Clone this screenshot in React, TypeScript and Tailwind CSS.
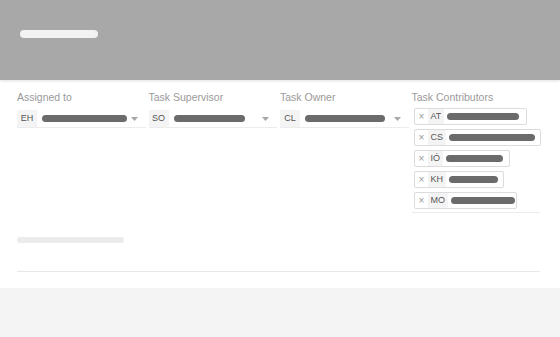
import React from "react";

const font = { fontFamily: '"Liberation Sans", Arial, sans-serif' };

function Single({ label, initials, bar }: { label: string; initials: string; bar: number }) {
  return (
    <div className="flex flex-col">
      <div className="text-[10.5px] leading-[13px] text-[#9a9a9a] h-[13px]">{label}</div>
      <div className="mt-[6px] flex items-center h-[17px] border-b border-[#ececec] box-content">
        <div className="h-[17px] w-[20px] bg-[#f4f4f4] text-[9px] text-[#555] flex items-center justify-center">{initials}</div>
        <div className="ml-[5px] h-[7px] rounded-full bg-[#6b6b6b]" style={{ width: bar }} />
        <div className="flex-1" />
        <svg width="7" height="4" viewBox="0 0 7 4" className="mr-[8px]"><path d="M0 0h7L3.5 4z" fill="#a8a8a8" /></svg>
      </div>
    </div>
  );
}

function Chip({ initials, width, bar }: { initials: string; width: number; bar: number }) {
  return (
    <div className="h-[17px] border border-[#dcdcdc] rounded-[2px] flex items-center ml-[2px] bg-white" style={{ width }}>
      <span className="text-[10px] text-[#9a9a9a] ml-[4px] w-[9px] leading-none">×</span>
      <div className="h-[15px] px-[3px] bg-[#f4f4f4] text-[9px] text-[#555] flex items-center">{initials}</div>
      <div className="ml-[3px] h-[7px] rounded-full bg-[#6b6b6b]" style={{ width: bar }} />
    </div>
  );
}

export default function App() {
  return (
    <div className="w-[560px] h-[337px] bg-[#f4f4f4]" style={font}>
      <div className="h-[80px] bg-[#a8a8a8] pt-[30px] pl-[20px] shadow-[0_1px_3px_rgba(0,0,0,0.12)] relative z-10">
        <div className="w-[78px] h-[8px] rounded-full bg-[#f2f2f2]" />
      </div>
      <div className="bg-white h-[208px] px-[17px] pt-[11px]">
        <div className="grid grid-cols-4 gap-x-[3px] w-[523px]">
          <Single label="Assigned to" initials="EH" bar={85} />
          <Single label="Task Supervisor" initials="SO" bar={71} />
          <Single label="Task Owner" initials="CL" bar={80} />
          <div className="flex flex-col">
            <div className="text-[10.5px] leading-[13px] text-[#9a9a9a] h-[13px]">Task Contributors</div>
            <div className="mt-[4px] flex flex-col gap-[4px] border-b border-[#ececec] pb-[3px]">
              <Chip initials="AT" width={113} bar={72} />
              <Chip initials="CS" width={127} bar={86} />
              <Chip initials="IÓ" width={96} bar={57} />
              <Chip initials="KH" width={90} bar={49} />
              <Chip initials="MO" width={103} bar={64} />
            </div>
          </div>
        </div>
        <div className="mt-[24px] w-[107px] h-[6px] rounded-full bg-[#ececec]" />
        <div className="mt-[28px] w-[523px] h-px bg-[#e8e8e8]" />
      </div>
    </div>
  );
}
